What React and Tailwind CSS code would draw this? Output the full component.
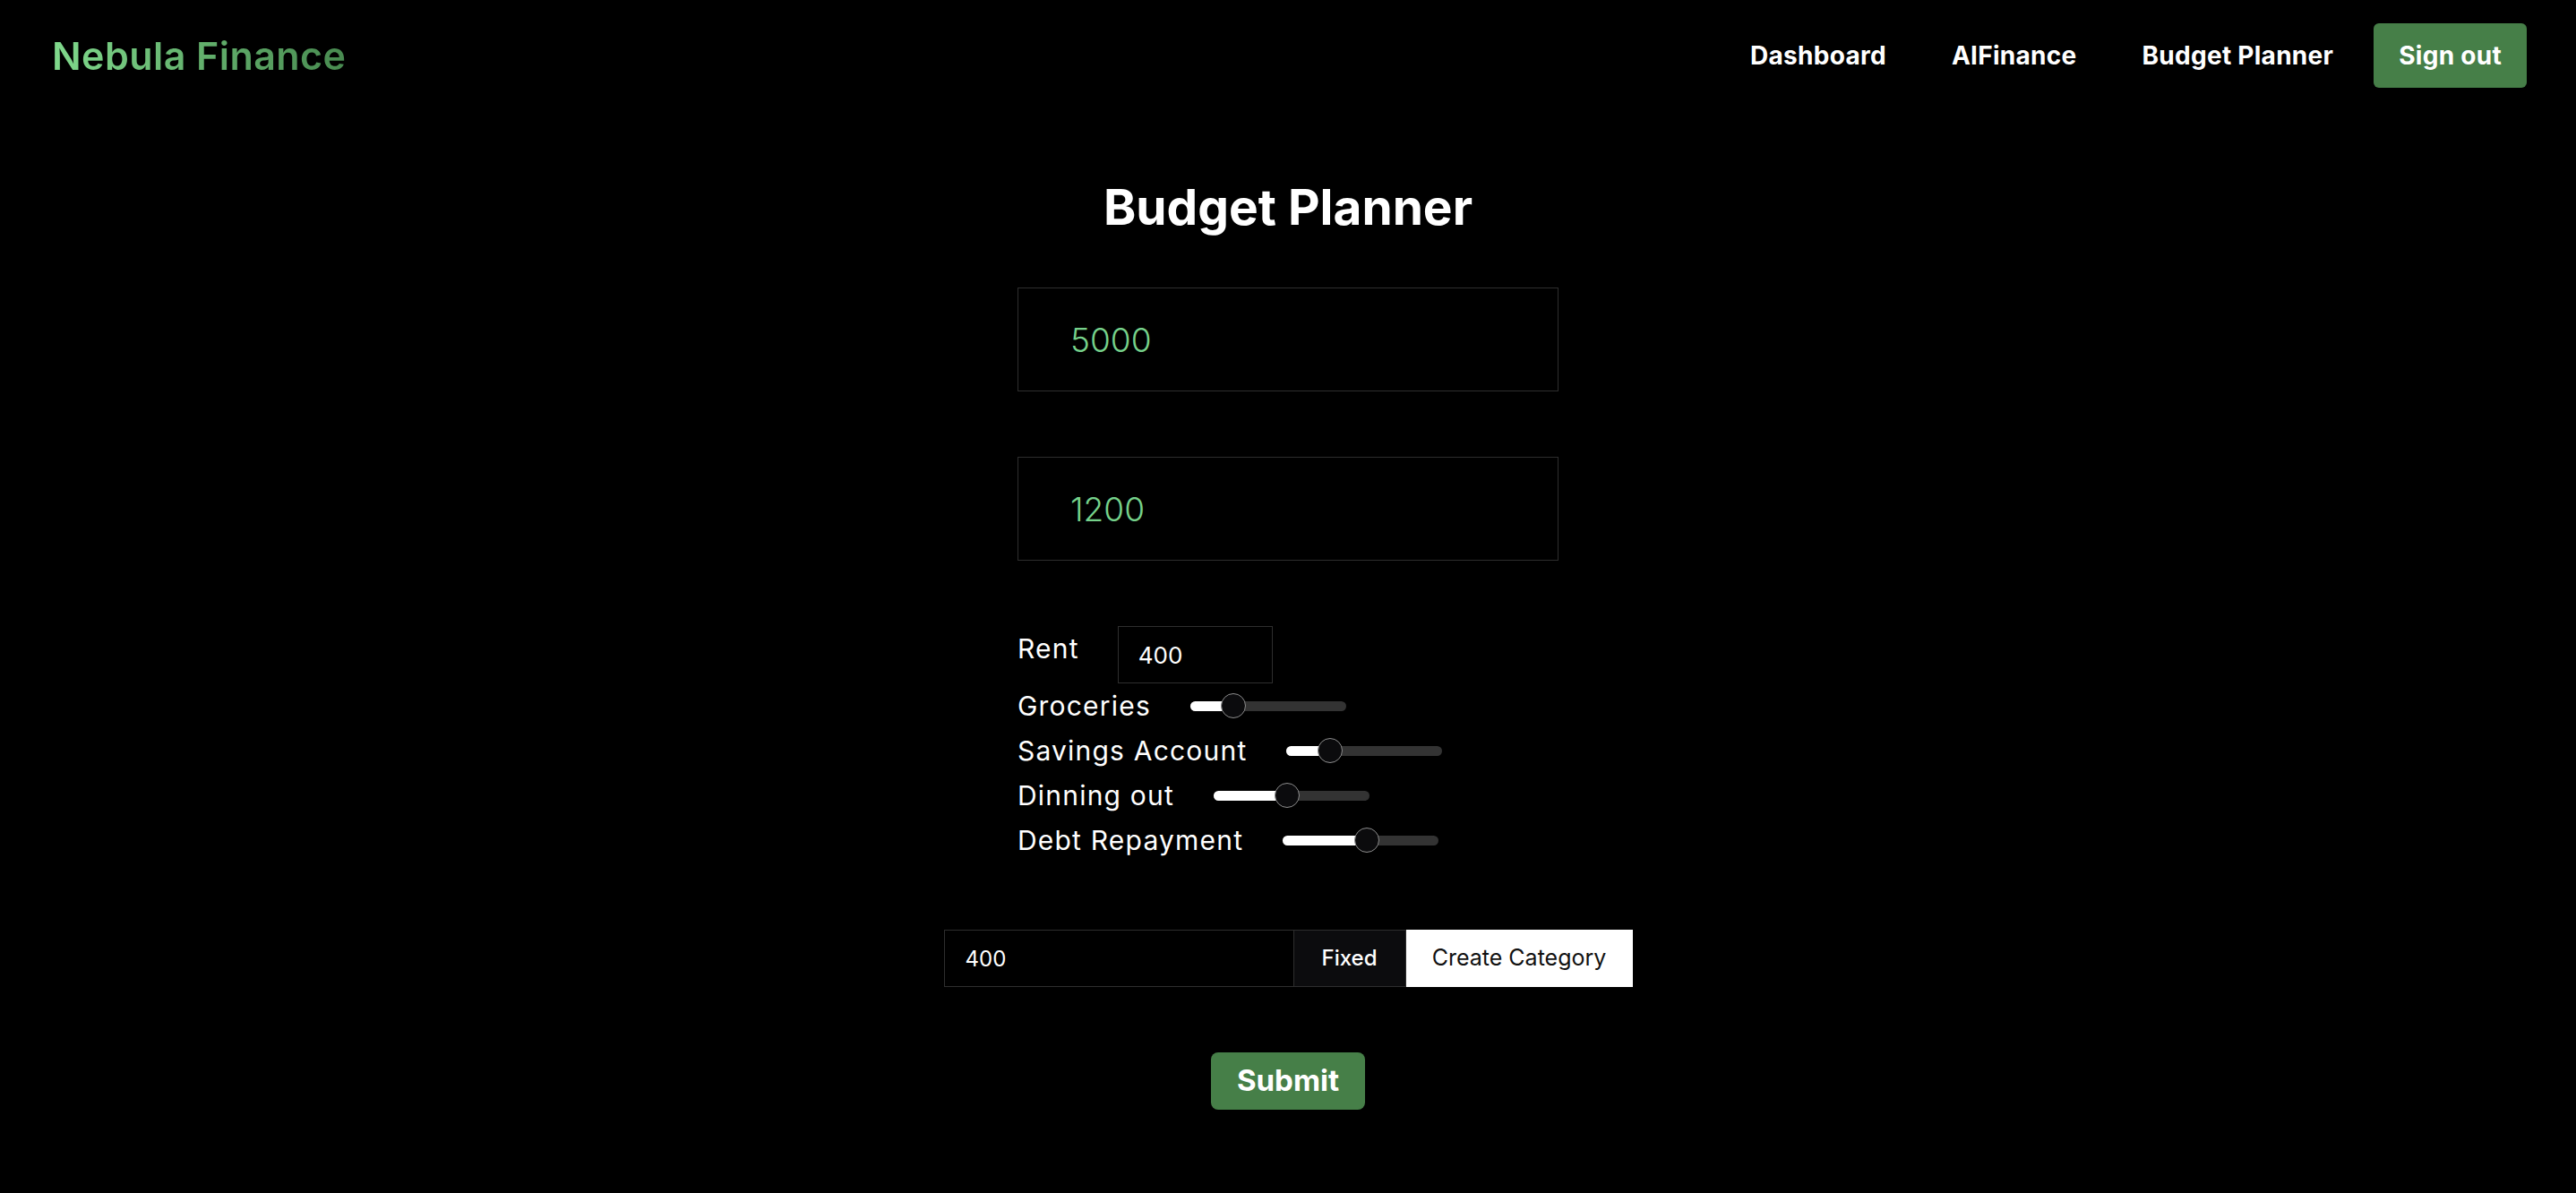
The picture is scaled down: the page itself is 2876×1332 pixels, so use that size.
import React, { useState } from "react";

const categories = [
  { name: "Groceries", value: 48 },
  { name: "Savings Account", value: 49 },
  { name: "Dinning out", value: 82 },
  { name: "Debt Repayment", value: 94 },
];

const Slider = ({ value }) => {
  // value = thumb centre in px from the track start
  return (
    <div className="relative w-[174px] h-[11px] rounded-full bg-[#333333]">
      <div
        className="absolute left-0 top-0 h-full rounded-full bg-white"
        style={{ width: value }}
      />
      <div
        className="absolute top-1/2 w-[28px] h-[28px] -translate-y-1/2 rounded-full bg-[#0b0b0d] border-[1.5px] border-[#8c8c8c]"
        style={{ left: value - 14 }}
      />
    </div>
  );
};

export default function App() {
  const [income, setIncome] = useState("5000");
  const [savings, setSavings] = useState("1200");
  const [rent, setRent] = useState("400");
  const [amount, setAmount] = useState("400");

  return (
    <div className="min-h-screen w-full bg-black text-white font-['Inter',sans-serif]">
      {/* Navbar */}
      <header className="flex items-center justify-between pl-[58px] pr-[55px] pt-[26px]">
        <h1 className="text-[43px] leading-[72px] font-semibold tracking-[0.01em] bg-linear-to-r from-[#80d98c] to-[#488a50] bg-clip-text text-transparent">
          Nebula Finance
        </h1>
        <nav className="flex items-center gap-[45px]">
          <div className="flex items-center gap-[73px] text-[28px] font-bold tracking-[0.01em]">
            <a href="#">Dashboard</a>
            <a href="#">AIFinance</a>
            <a href="#">Budget Planner</a>
          </div>
          <button className="h-[72px] px-[28px] rounded-md bg-[#467f48] text-[28px] font-bold tracking-[0.01em] text-white">
            Sign out
          </button>
        </nav>
      </header>

      {/* Planner */}
      <main className="flex flex-col items-center">
        <h2 className="mt-[102px] text-[55px] leading-[62px] font-bold">
          Budget Planner
        </h2>

        <div className="mt-[59px] flex w-[604px] flex-col gap-[73px]">
          <input
            value={income}
            onChange={(e) => setIncome(e.target.value)}
            className="h-[116px] w-full border border-[#2e2e2e] bg-black pl-[58px] text-[37px] font-light text-[#76d28b] outline-none"
          />
          <input
            value={savings}
            onChange={(e) => setSavings(e.target.value)}
            className="h-[116px] w-full border border-[#2e2e2e] bg-black pl-[58px] text-[37px] font-light text-[#76d28b] outline-none"
          />

          <div className="flex flex-col text-[30px] tracking-[0.04em]">
            <div className="flex items-start gap-[43px]">
              <span className="leading-[50px]">Rent</span>
              <input
                value={rent}
                onChange={(e) => setRent(e.target.value)}
                className="h-[64px] w-[173px] border border-[#2e2e2e] bg-black pl-[22px] text-[26px] tracking-normal text-white outline-none"
              />
            </div>
            {categories.map((c) => (
              <div key={c.name} className="flex h-[50px] items-center gap-[44px]">
                <span className="leading-[50px]">{c.name}</span>
                <Slider value={c.value} />
              </div>
            ))}
          </div>
        </div>

        <div className="mt-[75px] flex h-[64px]">
          <input
            value={amount}
            onChange={(e) => setAmount(e.target.value)}
            className="h-full w-[391px] border border-[#2e2e2e] bg-black pl-[23px] text-[24px] text-white outline-none"
          />
          <div className="flex h-full w-[125px] items-center justify-center border border-l-0 border-[#2e2e2e] bg-[#0c0c0e] text-[24px] font-medium">
            Fixed
          </div>
          <button className="h-full w-[253px] bg-white text-[25px] text-[#111111]">
            Create Category
          </button>
        </div>

        <button className="mt-[73px] h-[64px] w-[172px] rounded-lg bg-[#467f48] text-[33px] font-bold text-white">
          Submit
        </button>
      </main>
    </div>
  );
}
